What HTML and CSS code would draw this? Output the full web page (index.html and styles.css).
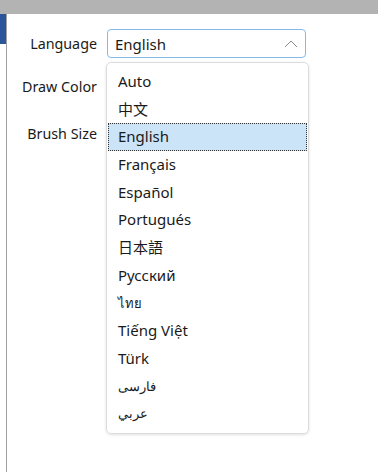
FILE: index.html
```html
<!DOCTYPE html>
<html>
<head>
  <title>Settings</title>
  <link rel="stylesheet" href="styles.css">
</head>
<body>
  <div class="titlebar"></div>
  <div class="main">
    <div class="sidebar">
      <div class="accent"></div>
    </div>
    <div class="content">
      <div class="labels">
        <div class="label lang">Language</div>
        <div class="label color">Draw Color</div>
        <div class="label brush">Brush Size</div>
      </div>
      <div class="picker">
        <div class="select">
          <span>English</span>
          <svg class="chevron" width="14" height="8" viewBox="0 0 14 8">
            <path d="M1 7 L7 1 L13 7" fill="none" stroke="#8a8a8a" stroke-width="1"/>
          </svg>
        </div>
        <ul class="dropdown">
          <li>Auto</li>
          <li>中文</li>
          <li class="selected">English</li>
          <li>Français</li>
          <li>Español</li>
          <li>Portugués</li>
          <li>日本語</li>
          <li>Русский</li>
          <li class="small">ไทย</li>
          <li>Tiếng Việt</li>
          <li>Türk</li>
          <li class="small">فارسی</li>
          <li class="small">عربي</li>
        </ul>
      </div>
    </div>
  </div>
</body>
</html>
```

FILE: styles.css
```css
body {
  margin: 0;
  font-family: "Noto Sans", "Noto Sans CJK SC", sans-serif;
  color: #1a1a1a;
  background: #fff;
  height: 472px;
  overflow: hidden;
}
.titlebar {
  height: 14px;
  background-color: #b3b3b3;
}
.main {
  display: flex;
  height: 458px;
}
.sidebar {
  width: 6px;
  border-right: 1px solid #a0a0a0;
}
.accent {
  height: 30px;
  background-color: #2b579a;
}
.content {
  display: flex;
  padding-top: 15px;
}
.labels {
  width: 90px;
  text-align: right;
  font-size: 14.3px;
}
.label {
  height: 20px;
  line-height: 20px;
}
.lang {
  margin-top: 5px;
}
.color {
  margin-top: 23px;
}
.brush {
  margin-top: 27px;
}
.picker {
  margin-left: 9px;
  width: 201px;
}
.select {
  height: 27px;
  margin-left: 1px;
  width: 183px;
  border: 1px solid #86b9e9;
  border-radius: 4px;
  display: flex;
  align-items: center;
  justify-content: space-between;
  padding: 0 7px;
  box-sizing: content-box;
  font-size: 15px;
}
.chevron {
  margin-top: 1px;
}
.dropdown {
  list-style: none;
  margin: 4px 0 0 0;
  padding: 5px 1px;
  width: 199px;
  border: 1px solid #dcdcdc;
  border-radius: 5px;
  box-shadow: 0 1px 3px rgba(0,0,0,0.12);
  font-size: 15px;
}
.dropdown li {
  height: 27.7px;
  line-height: 27px;
  padding-left: 10px;
  box-sizing: border-box;
}
.dropdown li.small {
  font-size: 13px;
}
.dropdown li.selected {
  background-color: #cce4f7;
  border: 1px dotted #333;
  padding-left: 9px;
  line-height: 25px;
}
```
